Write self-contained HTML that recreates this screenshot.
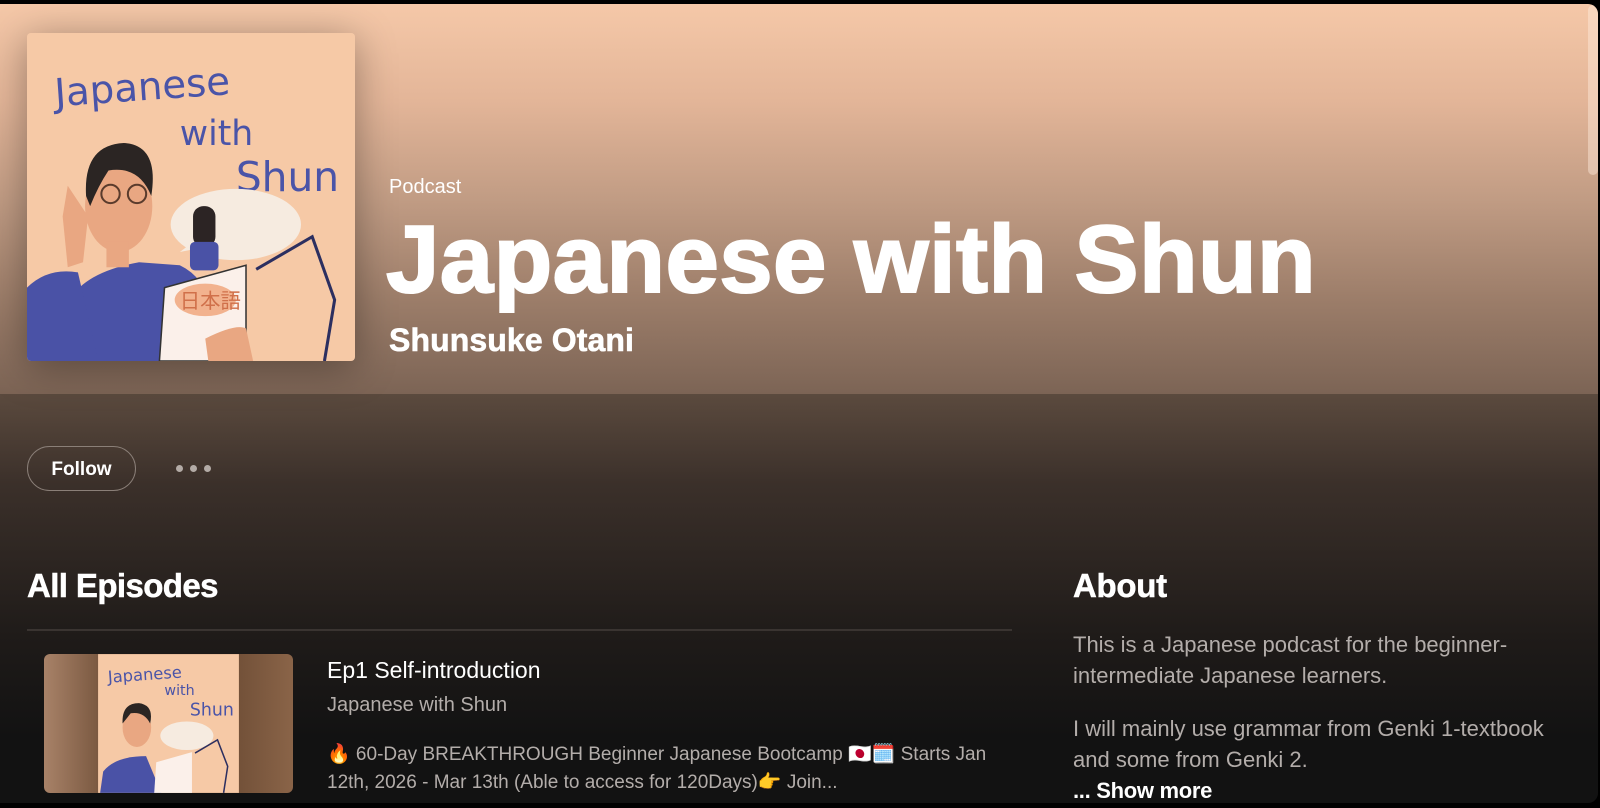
<!DOCTYPE html>
<html><head><meta charset="utf-8"><style>
*{margin:0;padding:0;box-sizing:border-box}
body{width:1600px;height:808px;background:#000;overflow:hidden;font-family:"Liberation Sans","Noto Sans CJK JP",sans-serif;color:#fff;position:relative}
#panel{position:absolute;left:0;top:4px;width:1598px;height:799px;border-radius:0 10px 10px 0;overflow:hidden;background:linear-gradient(180deg,#5b4a3e 390px,#3b302a 480px,#1f1b19 632px,#121212 735px)}
#hdr{position:absolute;left:0;top:0;width:100%;height:390px;background:linear-gradient(180deg,#f5c8a8 0%,#e3b598 25%,#c19c84 50%,#9d7e6a 75%,#7c6455 100%)}
#sb{position:absolute;left:1588px;top:1px;width:10px;height:170px;border-radius:5px;background:rgba(255,235,220,.45)}
.abs{position:absolute;white-space:nowrap}
#cover{position:absolute;left:27px;top:29px;width:328px;height:328px;border-radius:4px;overflow:hidden;box-shadow:0 6px 40px rgba(0,0,0,.35)}
.hand{font-family:"DejaVu Sans",sans-serif;fill:#4a54a8}
</style></head><body>
<div id="panel">
<div id="hdr"></div>
<div id="sb"></div>
<div id="cover">
<svg width="328" height="328" viewBox="0 0 322 322">
<rect width="322" height="322" fill="#f6c9a6"/>
<text x="28" y="72" class="hand" font-size="38" transform="rotate(-4 28 72)">Japanese</text>
<text x="150" y="110" class="hand" font-size="34">with</text>
<text x="205" y="155" class="hand" font-size="40">Shun</text>
<ellipse cx="205" cy="188" rx="64" ry="35" fill="#f6ebe0"/>
<path d="M150 215 L170 200 L165 212Z" fill="#f6ebe0"/>
<path d="M225 232 L280 200 L302 262 L292 322" stroke="#2c2f60" stroke-width="3" fill="none"/>
<path d="M38 322 L40 265 Q55 235 110 225 L150 228 Q175 240 180 270 L180 322Z" fill="#4a52a6"/>
<path d="M0 322 L0 250 Q20 230 50 235 L70 322Z" fill="#4a52a6"/>
<ellipse cx="90" cy="170" rx="33" ry="45" fill="#e9a782"/>
<path d="M58 160 Q55 110 95 108 Q130 110 122 160 Q110 130 80 135 Q70 150 62 170Z" fill="#2b2523"/>
<rect x="78" y="205" width="22" height="25" fill="#e9a782"/>
<circle cx="82" cy="158" r="9" fill="none" stroke="#5a3b2c" stroke-width="2"/>
<circle cx="108" cy="158" r="9" fill="none" stroke="#5a3b2c" stroke-width="2"/>
<path d="M40 150 L60 180 L55 225 L40 230 L35 180Z" fill="#e9a782"/>
<rect x="163" y="170" width="22" height="40" rx="10" fill="#2c2424"/>
<rect x="160" y="205" width="28" height="28" rx="5" fill="#4a52a6"/>
<path d="M135 250 L215 228 L215 322 L130 322Z" fill="#fbf0ea" stroke="#333" stroke-width="1.5"/>
<ellipse cx="175" cy="262" rx="30" ry="16" fill="#f2b28e"/>
<text x="150" y="270" font-size="20" fill="#d0704a" font-family="Noto Sans CJK JP,sans-serif">日本語</text>
<path d="M175 300 Q205 285 215 290 L222 322 L178 322Z" fill="#e9a782"/>
</svg>
</div>
<div class="abs" style="left:389px;top:172px;font-size:20px;color:#fff">Podcast</div>
<div class="abs" style="left:386px;top:191px;font-size:96px;font-weight:bold;letter-spacing:0.4px;-webkit-text-stroke:2px #fff;line-height:130px">Japanese with Shun</div>
<div class="abs" style="left:389px;top:318px;font-size:32px;font-weight:bold;letter-spacing:0.1px;-webkit-text-stroke:0.6px #fff">Shunsuke Otani</div>
<div class="abs" style="left:27px;top:442px;width:109px;height:45px;border:1.5px solid #8a7f78;border-radius:23px;font-size:19px;font-weight:bold;text-align:center;line-height:45px">Follow</div>
<div class="abs" style="left:176px;top:461px;width:7px;height:7px;border-radius:50%;background:#b3aba6"></div>
<div class="abs" style="left:190px;top:461px;width:7px;height:7px;border-radius:50%;background:#b3aba6"></div>
<div class="abs" style="left:204px;top:461px;width:7px;height:7px;border-radius:50%;background:#b3aba6"></div>
<div class="abs" style="left:27px;top:563px;font-size:33px;font-weight:bold;letter-spacing:-0.6px;-webkit-text-stroke:0.5px #fff">All Episodes</div>
<div class="abs" style="left:27px;top:625px;width:985px;height:2px;background:#3a3431"></div>
<div class="abs" style="left:44px;top:650px;width:249px;height:139px;border-radius:6px;overflow:hidden;background:linear-gradient(90deg,#a88268,#6a4a33 30%,#6a4a33 70%,#8a6448)">
<svg width="249" height="139" viewBox="0 0 244 136" style="position:absolute;left:0;top:0">
<rect x="53" y="0" width="138" height="136" fill="#f6c9a6"/>
<text x="63" y="28" class="hand" font-size="16" transform="rotate(-4 63 28)">Japanese</text>
<text x="118" y="40" class="hand" font-size="14">with</text>
<text x="143" y="60" class="hand" font-size="17">Shun</text>
<ellipse cx="140" cy="80" rx="26" ry="14" fill="#f6ebe0"/>
<path d="M55 136 L58 115 Q70 100 100 100 L115 136Z" fill="#4a52a6"/>
<ellipse cx="91" cy="72" rx="14" ry="19" fill="#e9a782"/>
<path d="M77 68 Q76 48 93 48 Q108 50 104 68 Q98 56 85 58Z" fill="#2b2523"/>
<path d="M110 106 L145 96 L145 136 L108 136Z" fill="#fbf0ea"/>
<path d="M148 97 L170 84 L180 110 L176 136" stroke="#2c2f60" stroke-width="1.5" fill="none"/>
</svg>
</div>
<div class="abs" style="left:327px;top:653px;font-size:23px;color:#fff">Ep1 Self-introduction</div>
<div class="abs" style="left:327px;top:690px;font-size:20px;color:#b3adaa">Japanese with Shun</div>
<div class="abs" style="left:327px;top:737px;font-size:19px;color:#b3adaa;line-height:28px;white-space:normal;width:680px">🔥 60-Day BREAKTHROUGH Beginner Japanese Bootcamp 🇯🇵🗓️ Starts Jan 12th, 2026 - Mar 13th (Able to access for 120Days)👉 Join...</div>
<div class="abs" style="left:1073px;top:563px;font-size:33px;font-weight:bold;letter-spacing:-0.3px;-webkit-text-stroke:0.5px #fff">About</div>
<div class="abs" style="left:1073px;top:625px;font-size:22px;color:#b3adaa;line-height:31px;white-space:normal;width:500px">This is a Japanese podcast for the beginner-intermediate Japanese learners.</div>
<div class="abs" style="left:1073px;top:709px;font-size:22px;color:#b3adaa;line-height:31px;white-space:normal;width:500px">I will mainly use grammar from Genki 1-textbook and some from Genki 2.</div>
<div class="abs" style="left:1073px;top:774px;font-size:22px;font-weight:bold;color:#fff;letter-spacing:-0.3px">... Show more</div>
</div>
</body></html>
